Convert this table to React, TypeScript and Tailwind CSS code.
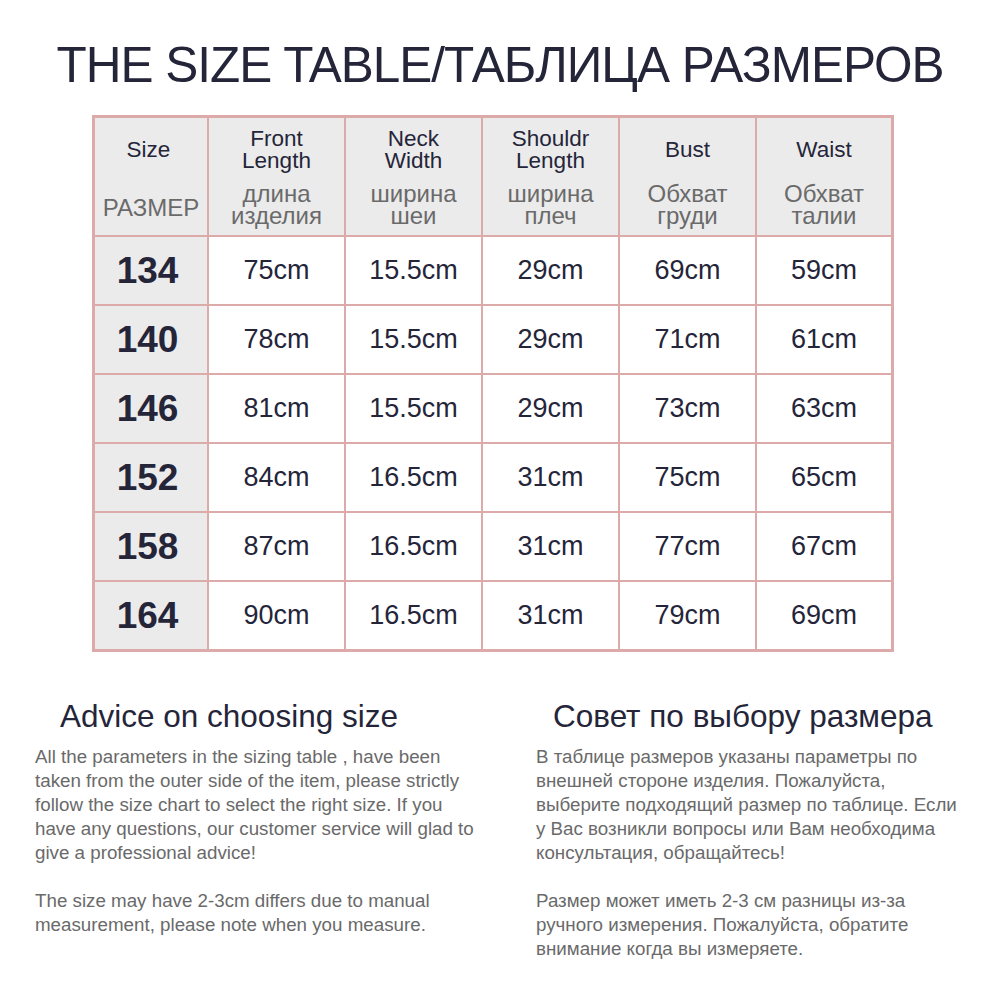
const HEAD = [
  { en: ["Size"], ru: ["РАЗМЕР"] },
  { en: ["Front", "Length"], ru: ["длина", "изделия"] },
  { en: ["Neck", "Width"], ru: ["ширина", "шеи"] },
  { en: ["Shouldr", "Length"], ru: ["ширина", "плеч"] },
  { en: ["Bust"], ru: ["Обхват", "груди"] },
  { en: ["Waist"], ru: ["Обхват", "талии"] },
];

const ROWS = [
  ["134", "75cm", "15.5cm", "29cm", "69cm", "59cm"],
  ["140", "78cm", "15.5cm", "29cm", "71cm", "61cm"],
  ["146", "81cm", "15.5cm", "29cm", "73cm", "63cm"],
  ["152", "84cm", "16.5cm", "31cm", "75cm", "65cm"],
  ["158", "87cm", "16.5cm", "31cm", "77cm", "67cm"],
  ["164", "90cm", "16.5cm", "31cm", "79cm", "69cm"],
];

const EN_P1 = [
  "All the parameters in the sizing table , have been",
  "taken from the outer side of the item, please strictly",
  "follow the size chart to select the right size. If you",
  "have any questions, our customer service will glad to",
  "give a professional advice!",
];
const EN_P2 = [
  "The size may have 2-3cm differs due to manual",
  "measurement, please note when you measure.",
];
const RU_P1 = [
  "В таблице размеров указаны параметры по",
  "внешней стороне изделия. Пожалуйста,",
  "выберите подходящий размер по таблице. Если",
  "у Вас возникли вопросы или Вам необходима",
  "консультация, обращайтесь!",
];
const RU_P2 = [
  "Размер может иметь 2-3 см разницы из-за",
  "ручного измерения. Пожалуйста, обратите",
  "внимание когда вы измеряете.",
];

function Lines({ lines }: { lines: string[] }) {
  return (
    <div>
      {lines.map((l, i) => (
        <div key={i} className="whitespace-nowrap">{l}</div>
      ))}
    </div>
  );
}

export default function App() {
  return (
    <div className="w-[1000px] h-[1000px] bg-white text-[#25253a] font-['Liberation_Sans',Arial,sans-serif] overflow-hidden">
      {/* Title */}
      <div className="pt-[30px] h-[115px] text-center text-[49.5px] leading-[70px] tracking-[-1px] whitespace-nowrap">
        THE SIZE TABLE/ТАБЛИЦА РАЗМЕРОВ
      </div>

      {/* Table */}
      <div className="ml-[92px] w-[802px] border-[3px] border-[#dcaaa8] bg-[#dcaaa8]">
        <div className="grid grid-cols-[112px_135px_135px_135px_135px_134px] grid-rows-[117px_67px_67px_67px_67px_67px_67px] gap-[2px]">
          {HEAD.map((h, i) => (
            <div key={i} className="bg-[#ebebeb] flex flex-col items-center text-center whitespace-nowrap">
              <div className={`h-[64px] flex flex-col justify-center text-[22.5px] leading-[22px] text-[#25253a] ${i === 0 ? "pr-[5px]" : ""}`}>
                {h.en.map(t => <div key={t}>{t}</div>)}
              </div>
              <div className={`h-[53px] flex flex-col text-[24px] leading-[22px] text-[#6a6a6a] ${h.ru.length === 1 ? "pt-[15px]" : "pt-[1px]"}`}>
                {h.ru.map(t => <div key={t}>{t}</div>)}
              </div>
            </div>
          ))}
          {ROWS.map(r =>
            r.map((c, j) => (
              <div key={r[0] + j}
                className={j === 0
                  ? "bg-[#ebebeb] flex items-center justify-center pr-[7px] text-[37px] font-bold text-[#25253a]"
                  : "bg-white flex items-center justify-center text-[27px] text-[#25253a]"}>
                {c}
              </div>
            ))
          )}
        </div>
      </div>

      {/* Advice */}
      <div className="flex mt-[44px]">
        <div className="w-[501px] pl-[35px]">
          <div className="pl-[25px] text-[31.5px] leading-[40px] text-[#25253a] whitespace-nowrap">Advice on choosing size</div>
          <div className="mt-[9px] text-[18.75px] leading-[24px] text-[#6a6a6a]">
            <Lines lines={EN_P1} />
            <div className="h-[24px]" />
            <Lines lines={EN_P2} />
          </div>
        </div>
        <div className="flex-1 pl-[35px]">
          <div className="pl-[17px] text-[31.5px] leading-[40px] text-[#25253a] whitespace-nowrap">Совет по выбору размера</div>
          <div className="mt-[9px] text-[18.75px] leading-[24px] text-[#6a6a6a]">
            <Lines lines={RU_P1} />
            <div className="h-[24px]" />
            <Lines lines={RU_P2} />
          </div>
        </div>
      </div>
    </div>
  );
}
